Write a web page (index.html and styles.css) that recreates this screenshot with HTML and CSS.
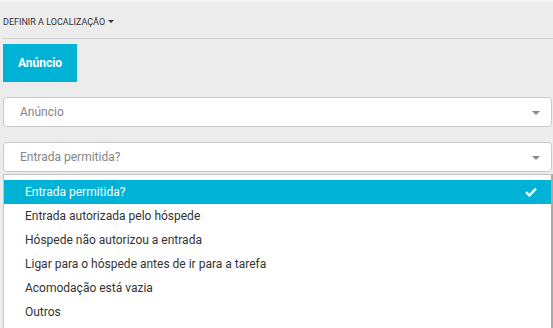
FILE: index.html
```html
<!DOCTYPE html>
<html lang="pt">
<head>
<meta charset="utf-8">
<title>Definir a localização</title>
<link rel="stylesheet" href="styles.css">
</head>
<body>
<div class="page">
    <div class="topbar">
        <span class="location">Definir a localização</span>
        <span class="caret"></span>
    </div>

    <button class="btn-primary">Anúncio</button>

    <div class="select">
        <span class="placeholder">Anúncio</span>
        <span class="arrow"></span>
    </div>

    <div class="select">
        <span class="placeholder">Entrada permitida?</span>
        <span class="arrow"></span>
    </div>

    <ul class="options">
        <li class="selected">Entrada permitida?
            <svg class="check" width="12" height="10" viewBox="0 0 12 10"><path d="M1 5.2 L4.4 8.4 L11 1.6" fill="none" stroke="#fff" stroke-width="2.4"/></svg>
        </li>
        <li>Entrada autorizada pelo hóspede</li>
        <li>Hóspede não autorizou a entrada</li>
        <li>Ligar para o hóspede antes de ir para a tarefa</li>
        <li>Acomodação está vazia</li>
        <li>Outros</li>
    </ul>
</div>
</body>
</html>
```

FILE: styles.css
```css
html, body { margin: 0; padding: 0; }
body { background: #ececec; font-family: Roboto, "Liberation Sans", sans-serif; color: #333; overflow: hidden; border-top: 2px solid #f5f5f5; }
.page { padding-left: 3px; }

.topbar { height: 36px; border-bottom: 1px solid #d4d4d4; display: flex; align-items: center; gap: 3px; }
.location { font-size: 9px; text-transform: uppercase; color: #333; padding-top: 4px; }
.caret { width: 0; height: 0; border-left: 3px solid transparent; border-right: 3px solid transparent; border-top: 3px solid #333; margin-top: 3px; }

.btn-primary { display: block; margin-top: 5px; width: 74px; height: 38px; border: 0; background: #00b2d6; color: #fff; font-family: inherit; font-size: 12px; font-weight: bold; padding: 0; }

.select { margin-top: 15px; width: 549px; height: 30px; box-sizing: border-box; background: #fff; border: 1px solid #c9c9c9; border-radius: 4px; display: flex; align-items: center; justify-content: space-between; padding: 0 11px 0 16px; }
.placeholder { font-size: 12px; color: #858585; }
.arrow { width: 0; height: 0; border-left: 4px solid transparent; border-right: 4px solid transparent; border-top: 4px solid #888; margin-top: 1px; }

.options { list-style: none; margin: 2px 0 0 0; padding: 5px 0 10px 0; width: 550px; box-sizing: border-box; background: #fff; border: 1px solid #c4c4c4; border-right: 2px solid #a9a9a9; }
.options li { height: 24px; line-height: 24px; padding: 0 14px 0 21px; font-size: 12px; color: #333; display: flex; align-items: center; justify-content: space-between; }
.options li.selected { background: #00b2d6; color: #fff; }
.check { display: block; }
```
